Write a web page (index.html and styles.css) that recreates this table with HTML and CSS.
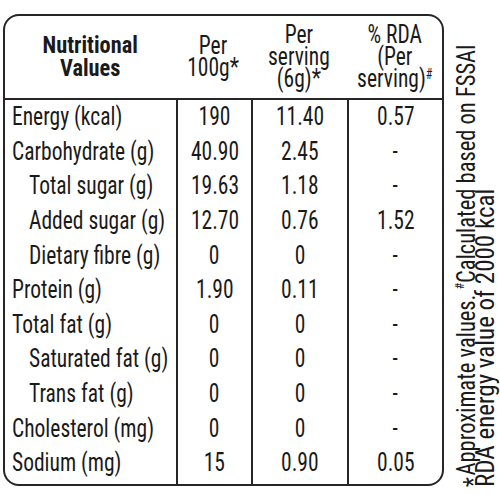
FILE: index.html
```html
<!DOCTYPE html>
<html>
<head>
<meta charset="utf-8">
<link rel="stylesheet" href="styles.css">
</head>
<body>
<div class="page">
  <div class="panel">
    <div class="grid">
      <div class="hd hd-name"><span class="sx">Nutritional<br>Values</span></div>
      <div class="hd"><span class="sx">Per<br>100g*</span></div>
      <div class="hd"><span class="sx">Per<br>serving<br>(6g)*</span></div>
      <div class="hd"><span class="sx">% RDA<br>(Per<br>serving)<sup>#</sup></span></div>

      <div class="lbl"><span class="sx">Energy (kcal)</span></div>
      <div class="v"><span class="sx">190</span></div>
      <div class="v"><span class="sx">11.40</span></div>
      <div class="v"><span class="sx">0.57</span></div>

      <div class="lbl"><span class="sx">Carbohydrate (g)</span></div>
      <div class="v"><span class="sx">40.90</span></div>
      <div class="v"><span class="sx">2.45</span></div>
      <div class="v"><span class="sx">-</span></div>

      <div class="lbl sub"><span class="sx">Total sugar (g)</span></div>
      <div class="v"><span class="sx">19.63</span></div>
      <div class="v"><span class="sx">1.18</span></div>
      <div class="v"><span class="sx">-</span></div>

      <div class="lbl sub"><span class="sx">Added sugar (g)</span></div>
      <div class="v"><span class="sx">12.70</span></div>
      <div class="v"><span class="sx">0.76</span></div>
      <div class="v"><span class="sx">1.52</span></div>

      <div class="lbl sub"><span class="sx">Dietary fibre (g)</span></div>
      <div class="v"><span class="sx">0</span></div>
      <div class="v"><span class="sx">0</span></div>
      <div class="v"><span class="sx">-</span></div>

      <div class="lbl"><span class="sx">Protein (g)</span></div>
      <div class="v"><span class="sx">1.90</span></div>
      <div class="v"><span class="sx">0.11</span></div>
      <div class="v"><span class="sx">-</span></div>

      <div class="lbl"><span class="sx">Total fat (g)</span></div>
      <div class="v"><span class="sx">0</span></div>
      <div class="v"><span class="sx">0</span></div>
      <div class="v"><span class="sx">-</span></div>

      <div class="lbl sub"><span class="sx">Saturated fat (g)</span></div>
      <div class="v"><span class="sx">0</span></div>
      <div class="v"><span class="sx">0</span></div>
      <div class="v"><span class="sx">-</span></div>

      <div class="lbl sub"><span class="sx">Trans fat (g)</span></div>
      <div class="v"><span class="sx">0</span></div>
      <div class="v"><span class="sx">0</span></div>
      <div class="v"><span class="sx">-</span></div>

      <div class="lbl"><span class="sx">Cholesterol (mg)</span></div>
      <div class="v"><span class="sx">0</span></div>
      <div class="v"><span class="sx">0</span></div>
      <div class="v"><span class="sx">-</span></div>

      <div class="lbl"><span class="sx">Sodium (mg)</span></div>
      <div class="v"><span class="sx">15</span></div>
      <div class="v"><span class="sx">0.90</span></div>
      <div class="v"><span class="sx">0.05</span></div>
    </div>
  </div>
  <div class="note">
    <span class="ln ln1"><span class="ast">*</span>Approximate values. <sup>#</sup>Calculated based on FSSAI</span>
    <span class="ln ln2">RDA energy value of 2000 kcal</span>
  </div>
</div>
</body>
</html>
```
FILE: styles.css
```css
html, body {
  margin: 0;
  padding: 0;
  background: #ffffff;
}

body {
  font-family: "Roboto Condensed", Roboto, "Liberation Sans", sans-serif;
  font-stretch: condensed;
  font-weight: 380;
  font-size: 25px;
  color: #1a1a1a;
}

.page {
  display: flex;
  align-items: flex-start;
  height: 487px;
}

.panel {
  margin: 14px 0 0 3px;
  width: 441px;
  height: 472px;
  box-sizing: border-box;
  border: 2px solid #262626;
  border-radius: 16px;
  overflow: hidden;
  flex: none;
}

.grid {
  display: grid;
  grid-template-columns: 171px 75px 96px 1fr;
  grid-template-rows: 84px repeat(10, 34.65px) 1fr;
  height: 100%;
}

.sx {
  display: inline-block;
  transform: scaleX(0.86);
  transform-origin: center;
  white-space: nowrap;
}

.hd {
  display: flex;
  align-items: center;
  justify-content: center;
  text-align: center;
  line-height: 22px;
  border-bottom: 2px solid #262626;
}

.hd-name {
  font-weight: 700;
  font-size: 24px;
  line-height: 23px;
}

.hd-name .sx {
  transform: scaleX(0.93);
}

.hd sup {
  font-size: 14px;
  line-height: 0;
  vertical-align: 8px;
}

.lbl {
  line-height: 34.65px;
  padding-left: 7px;
  white-space: nowrap;
}

.lbl .sx {
  transform-origin: left center;
}

.lbl.sub {
  padding-left: 24px;
}

.v {
  line-height: 34.65px;
  text-align: center;
  border-left: 2px solid #262626;
}

.note {
  writing-mode: vertical-rl;
  transform: rotate(180deg);
  height: 560px;
  align-self: flex-end;
  margin-left: 14px;
  line-height: 18.5px;
  white-space: nowrap;
  flex: none;
}

.ln {
  display: block;
  transform-origin: top center;
}

.ln1 {
  transform: scaleY(0.9);
}

.ln2 {
  transform: scaleY(1.0);
}

.ast {
  display: inline-block;
  padding-bottom: 2px;
  transform: translateX(-7px);
}

.note sup {
  font-size: 13px;
  line-height: 0;
  vertical-align: 7px;
}
```
